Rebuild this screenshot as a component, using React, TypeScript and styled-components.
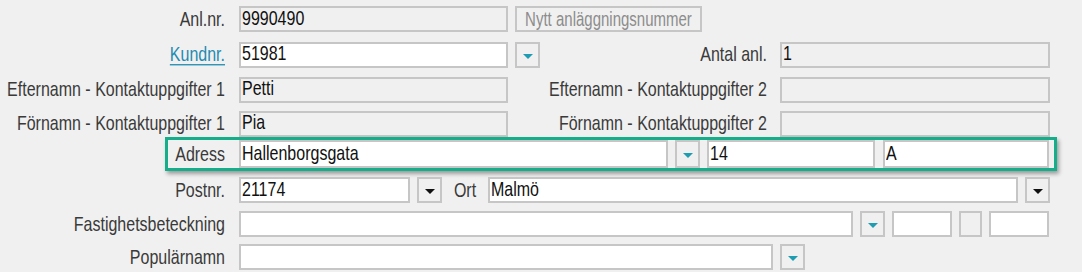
import React from "react";
import styled, { createGlobalStyle } from "styled-components";

const GlobalStyle = createGlobalStyle`
  html, body {
    margin: 0;
    padding: 0;
    background: #f0f0f0;
  }
  body {
    font-family: "Liberation Sans", Arial, sans-serif;
    font-size: 16px;
    color: #3c3c3c;
  }
`;

const Form = styled.div`
  display: flex;
  flex-direction: column;
  padding-top: 6px;
  width: 1082px;
  height: 266px;
  overflow: hidden;
`;

const Row = styled.div<{ $mt?: number }>`
  display: flex;
  align-items: center;
  height: 26px;
  margin-top: ${(p) => p.$mt ?? 0}px;
`;

const HighlightRow = styled.div`
  display: flex;
  align-items: center;
  box-sizing: border-box;
  margin-left: 165px;
  width: 892px;
  height: 34px;
  padding-right: 5px;
  border: 3px solid #16ad8b;
  box-shadow: 2px 3px 4px rgba(0, 0, 0, 0.35);
`;

const Label = styled.div<{ $w: number; $align?: string; $mr?: number }>`
  display: flex;
  align-items: center;
  justify-content: ${(p) => p.$align ?? "flex-end"};
  flex: none;
  width: ${(p) => p.$w}px;
  margin-right: ${(p) => p.$mr ?? 14}px;
  white-space: nowrap;
  overflow: visible;
  color: #3a3a3a;
`;

const Text = styled.span`
  display: inline-block;
  line-height: 1;
  transform: scaleY(1.3);
  transform-origin: center;
  white-space: nowrap;
`;

const LinkText = styled(Text)`
  color: #1f8bb0;
  text-decoration: underline;
  text-underline-offset: 2px;
`;

const Field = styled.div<{ $w: number; $ro?: boolean; $ml?: number; $h?: number }>`
  display: flex;
  align-items: center;
  box-sizing: border-box;
  flex: none;
  width: ${(p) => p.$w}px;
  height: ${(p) => p.$h ?? 26}px;
  margin-left: ${(p) => p.$ml ?? 0}px;
  padding: 0 0 2px 1px;
  border: 2px solid #c6c6c6;
  background: ${(p) => (p.$ro ? "#f0f0f0" : "#ffffff")};
  color: #111111;
  overflow: hidden;
`;

const DropButton = styled.div<{ $ml?: number; $h?: number }>`
  display: flex;
  align-items: center;
  justify-content: center;
  box-sizing: border-box;
  flex: none;
  width: 25px;
  height: ${(p) => p.$h ?? 26}px;
  margin-left: ${(p) => p.$ml ?? 7}px;
  padding-top: 3px;
  border: 2px solid #c6c6c6;
  background: #f0f0f0;
`;

const Triangle = styled.span<{ $dark?: boolean }>`
  width: 0;
  height: 0;
  border-left: 5px solid transparent;
  border-right: 5px solid transparent;
  border-top: 5px solid ${(p) => (p.$dark ? "#111111" : "#1e9cb2")};
`;

const GhostButton = styled.div`
  display: flex;
  align-items: center;
  justify-content: center;
  box-sizing: border-box;
  width: 187px;
  height: 26px;
  margin-left: 7px;
  padding-bottom: 2px;
  border: 2px solid #c6c6c6;
  background: #f0f0f0;
  color: #8c8c8c;
  font-size: 15px;
`;

const Drop = ({ dark, ml, h }: { dark?: boolean; ml?: number; h?: number }) => (
  <DropButton $ml={ml} $h={h}>
    <Triangle $dark={dark} />
  </DropButton>
);

const App = () => {
  return (
    <>
      <GlobalStyle />
      <Form>
        <Row>
          <Label $w={225}>
            <Text>Anl.nr.</Text>
          </Label>
          <Field $w={269} $ro>
            <Text>9990490</Text>
          </Field>
          <GhostButton>
            <Text>Nytt anläggningsnummer</Text>
          </GhostButton>
        </Row>

        <Row $mt={10}>
          <Label $w={225}>
            <LinkText>Kundnr.</LinkText>
          </Label>
          <Field $w={269}>
            <Text>51981</Text>
          </Field>
          <Drop />
          <Label $w={227} $mr={13}>
            <Text>Antal anl.</Text>
          </Label>
          <Field $w={270} $ro>
            <Text>1</Text>
          </Field>
        </Row>

        <Row $mt={9}>
          <Label $w={225}>
            <Text>Efternamn - Kontaktuppgifter 1</Text>
          </Label>
          <Field $w={269} $ro>
            <Text>Petti</Text>
          </Field>
          <Label $w={259} $mr={13}>
            <Text>Efternamn - Kontaktuppgifter 2</Text>
          </Label>
          <Field $w={270} $ro />
        </Row>

        <Row $mt={8}>
          <Label $w={225}>
            <Text>Förnamn - Kontaktuppgifter 1</Text>
          </Label>
          <Field $w={269} $ro>
            <Text>Pia</Text>
          </Field>
          <Label $w={259} $mr={13}>
            <Text>Förnamn - Kontaktuppgifter 2</Text>
          </Label>
          <Field $w={270} $ro />
        </Row>

        <HighlightRow>
          <Label $w={57}>
            <Text>Adress</Text>
          </Label>
          <Field $w={429} $h={28}>
            <Text>Hallenborgsgata</Text>
          </Field>
          <Drop h={28} />
          <Field $w={168} $h={28} $ml={7}>
            <Text>14</Text>
          </Field>
          <Field $w={166} $h={28} $ml={8}>
            <Text>A</Text>
          </Field>
        </HighlightRow>

        <Row $mt={6}>
          <Label $w={225}>
            <Text>Postnr.</Text>
          </Label>
          <Field $w={171}>
            <Text>21174</Text>
          </Field>
          <Drop dark />
          <Label $w={46} $align="center" $mr={0}>
            <Text>Ort</Text>
          </Label>
          <Field $w={530}>
            <Text>Malmö</Text>
          </Field>
          <Drop dark />
        </Row>

        <Row $mt={8}>
          <Label $w={225}>
            <Text>Fastighetsbeteckning</Text>
          </Label>
          <Field $w={614} />
          <Drop />
          <Field $w={60} $ml={7} />
          <Field $w={23} $ml={7} $ro />
          <Field $w={60} $ml={7} />
        </Row>

        <Row $mt={7}>
          <Label $w={225}>
            <Text>Populärnamn</Text>
          </Label>
          <Field $w={534} />
          <Drop />
        </Row>
      </Form>
    </>
  );
};

export default App;
